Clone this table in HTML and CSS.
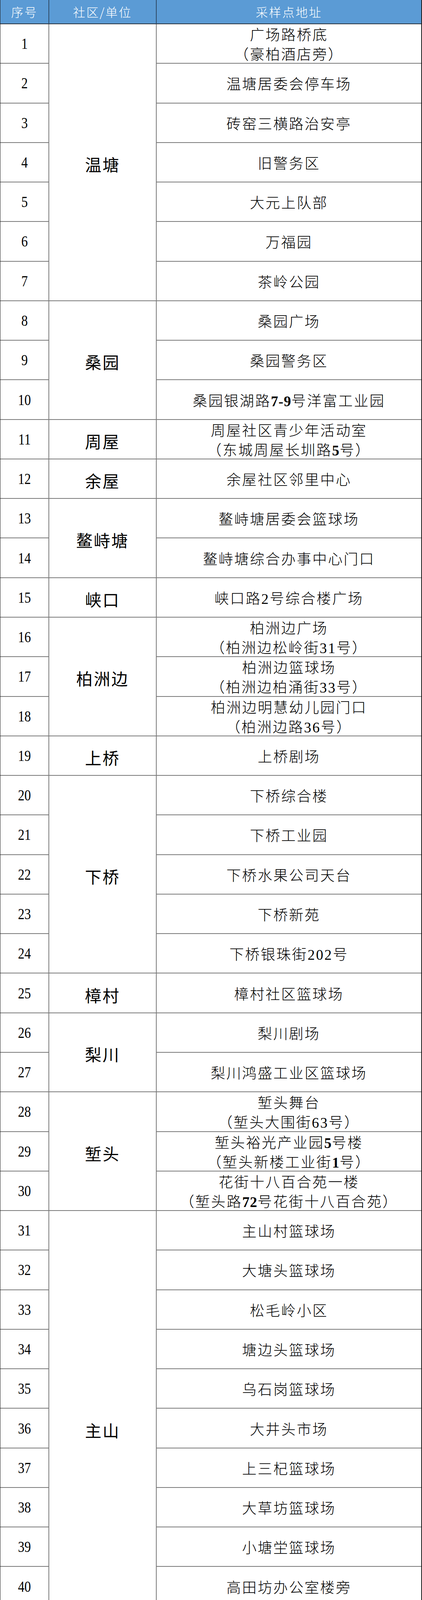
FILE: index.html
```html
<!DOCTYPE html>
<html lang="zh-CN">
<head>
<meta charset="utf-8">
<title>采样点地址</title>
<link rel="stylesheet" href="styles.css">
</head>
<body>
<div class="sheet">
  <div class="hd c1">序号</div>
  <div class="hd c2">社区/单位</div>
  <div class="hd c3">采样点地址</div>

  <div class="num c1"><span>1</span></div>
  <div class="com c2 s7">温塘</div>
  <div class="addr c3"><p>广场路桥底<br>（豪柏酒店旁）</p></div>
  <div class="num c1"><span>2</span></div>
  <div class="addr c3"><p>温塘居委会停车场</p></div>
  <div class="num c1"><span>3</span></div>
  <div class="addr c3"><p>砖窑三横路治安亭</p></div>
  <div class="num c1"><span>4</span></div>
  <div class="addr c3"><p>旧警务区</p></div>
  <div class="num c1"><span>5</span></div>
  <div class="addr c3"><p>大元上队部</p></div>
  <div class="num c1"><span>6</span></div>
  <div class="addr c3"><p>万福园</p></div>
  <div class="num c1"><span>7</span></div>
  <div class="addr c3"><p>茶岭公园</p></div>

  <div class="num c1"><span>8</span></div>
  <div class="com c2 s3">桑园</div>
  <div class="addr c3"><p>桑园广场</p></div>
  <div class="num c1"><span>9</span></div>
  <div class="addr c3"><p>桑园警务区</p></div>
  <div class="num c1"><span>10</span></div>
  <div class="addr c3"><p>桑园银湖路<b>7-9</b>号洋富工业园</p></div>

  <div class="num c1"><span>11</span></div>
  <div class="com c2">周屋</div>
  <div class="addr c3"><p>周屋社区青少年活动室<br>（东城周屋长圳路<b>5</b>号）</p></div>

  <div class="num c1"><span>12</span></div>
  <div class="com c2">余屋</div>
  <div class="addr c3"><p>余屋社区邻里中心</p></div>

  <div class="num c1"><span>13</span></div>
  <div class="com c2 s2">鳌峙塘</div>
  <div class="addr c3"><p>鳌峙塘居委会篮球场</p></div>
  <div class="num c1"><span>14</span></div>
  <div class="addr c3"><p>鳌峙塘综合办事中心门口</p></div>

  <div class="num c1"><span>15</span></div>
  <div class="com c2">峡口</div>
  <div class="addr c3"><p>峡口路2号综合楼广场</p></div>

  <div class="num c1"><span>16</span></div>
  <div class="com c2 s3">柏洲边</div>
  <div class="addr c3"><p>柏洲边广场<br>（柏洲边松岭街31号）</p></div>
  <div class="num c1"><span>17</span></div>
  <div class="addr c3"><p>柏洲边篮球场<br>（柏洲边柏涌街33号）</p></div>
  <div class="num c1"><span>18</span></div>
  <div class="addr c3"><p>柏洲边明慧幼儿园门口<br>（柏洲边路36号）</p></div>

  <div class="num c1"><span>19</span></div>
  <div class="com c2">上桥</div>
  <div class="addr c3"><p>上桥剧场</p></div>

  <div class="num c1"><span>20</span></div>
  <div class="com c2 s5">下桥</div>
  <div class="addr c3"><p>下桥综合楼</p></div>
  <div class="num c1"><span>21</span></div>
  <div class="addr c3"><p>下桥工业园</p></div>
  <div class="num c1"><span>22</span></div>
  <div class="addr c3"><p>下桥水果公司天台</p></div>
  <div class="num c1"><span>23</span></div>
  <div class="addr c3"><p>下桥新苑</p></div>
  <div class="num c1"><span>24</span></div>
  <div class="addr c3"><p>下桥银珠街202号</p></div>

  <div class="num c1"><span>25</span></div>
  <div class="com c2">樟村</div>
  <div class="addr c3"><p>樟村社区篮球场</p></div>

  <div class="num c1"><span>26</span></div>
  <div class="com c2 s2">梨川</div>
  <div class="addr c3"><p>梨川剧场</p></div>
  <div class="num c1"><span>27</span></div>
  <div class="addr c3"><p>梨川鸿盛工业区篮球场</p></div>

  <div class="num c1"><span>28</span></div>
  <div class="com c2 s3">堑头</div>
  <div class="addr c3"><p>堑头舞台<br>（堑头大围街63号）</p></div>
  <div class="num c1"><span>29</span></div>
  <div class="addr c3"><p>堑头裕光产业园<b>5</b>号楼<br>（堑头新楼工业街<b>1</b>号）</p></div>
  <div class="num c1"><span>30</span></div>
  <div class="addr c3"><p>花街十八百合苑一楼<br>（堑头路<b>72</b>号花街十八百合苑）</p></div>

  <div class="num c1"><span>31</span></div>
  <div class="com c2 s11 end">主山</div>
  <div class="addr c3"><p>主山村篮球场</p></div>
  <div class="num c1"><span>32</span></div>
  <div class="addr c3"><p>大塘头篮球场</p></div>
  <div class="num c1"><span>33</span></div>
  <div class="addr c3"><p>松毛岭小区</p></div>
  <div class="num c1"><span>34</span></div>
  <div class="addr c3"><p>塘边头篮球场</p></div>
  <div class="num c1"><span>35</span></div>
  <div class="addr c3"><p>乌石岗篮球场</p></div>
  <div class="num c1"><span>36</span></div>
  <div class="addr c3"><p>大井头市场</p></div>
  <div class="num c1"><span>37</span></div>
  <div class="addr c3"><p>上三杞篮球场</p></div>
  <div class="num c1"><span>38</span></div>
  <div class="addr c3"><p>大草坊篮球场</p></div>
  <div class="num c1"><span>39</span></div>
  <div class="addr c3"><p>小塘坣篮球场</p></div>
  <div class="num c1"><span>40</span></div>
  <div class="addr c3"><p>高田坊办公室楼旁</p></div>
  <div class="num c1 end"><span>41</span></div>
  <div class="addr c3 end"><p>涡岭篮球场</p></div>
</div>
</body>
</html>
```
FILE: styles.css
```css
html, body {
  margin: 0;
  padding: 0;
  background: #ffffff;
}

.sheet {
  box-sizing: border-box;
  width: 1080px;
  height: 4214px;
  display: grid;
  grid-template-columns: 125px 275px minmax(0, 1fr);
  grid-template-rows: 62px repeat(41, minmax(0, 1fr));
  border-left: 1px solid #1e1e1e;
  border-right: 2px solid #1e1e1e;
  font-family: "Liberation Serif", "Noto Sans CJK SC", serif;
  color: #000;
}

.sheet > div {
  box-sizing: border-box;
  display: flex;
  align-items: center;
  justify-content: center;
  text-align: center;
  border-bottom: 2px solid #7a7a7a;
  border-right: 2px solid #7a7a7a;
  min-width: 0;
  min-height: 0;
  overflow: hidden;
}

.c1 { grid-column: 1; }
.c2 { grid-column: 2; }
.sheet > .c3 { grid-column: 3; border-right: 0; }

.s2 { grid-row: span 2; }
.s3 { grid-row: span 3; }
.s5 { grid-row: span 5; }
.s7 { grid-row: span 7; }
.s11 { grid-row: span 11; }

.sheet > .end { border-bottom: 2px solid #1e1e1e; }

.sheet > .hd {
  background: #5b9bd5;
  color: #ffffff;
  font-family: "Noto Sans CJK SC", sans-serif;
  font-weight: 300;
  font-size: 31px;
  letter-spacing: 3px;
  border-bottom: 2px solid #2b3440;
  border-right-color: #2f4a66;
  padding-bottom: 2px;
}

.num span {
  display: inline-block;
  font-family: "Liberation Serif", serif;
  font-size: 39px;
  line-height: 1;
  transform: scaleX(0.85);
}

.com {
  font-family: "Noto Sans CJK SC", sans-serif;
  font-size: 42px;
  font-weight: 400;
  letter-spacing: 3px;
  padding-top: 8px;
}

.addr {
  padding-top: 9px;
}

.addr p {
  margin: 0;
  font-size: 37px;
  font-weight: 300;
  letter-spacing: 3px;
  line-height: 50px;
  white-space: nowrap;
}

.addr b {
  font-weight: 700;
  letter-spacing: 1px;
}
```
